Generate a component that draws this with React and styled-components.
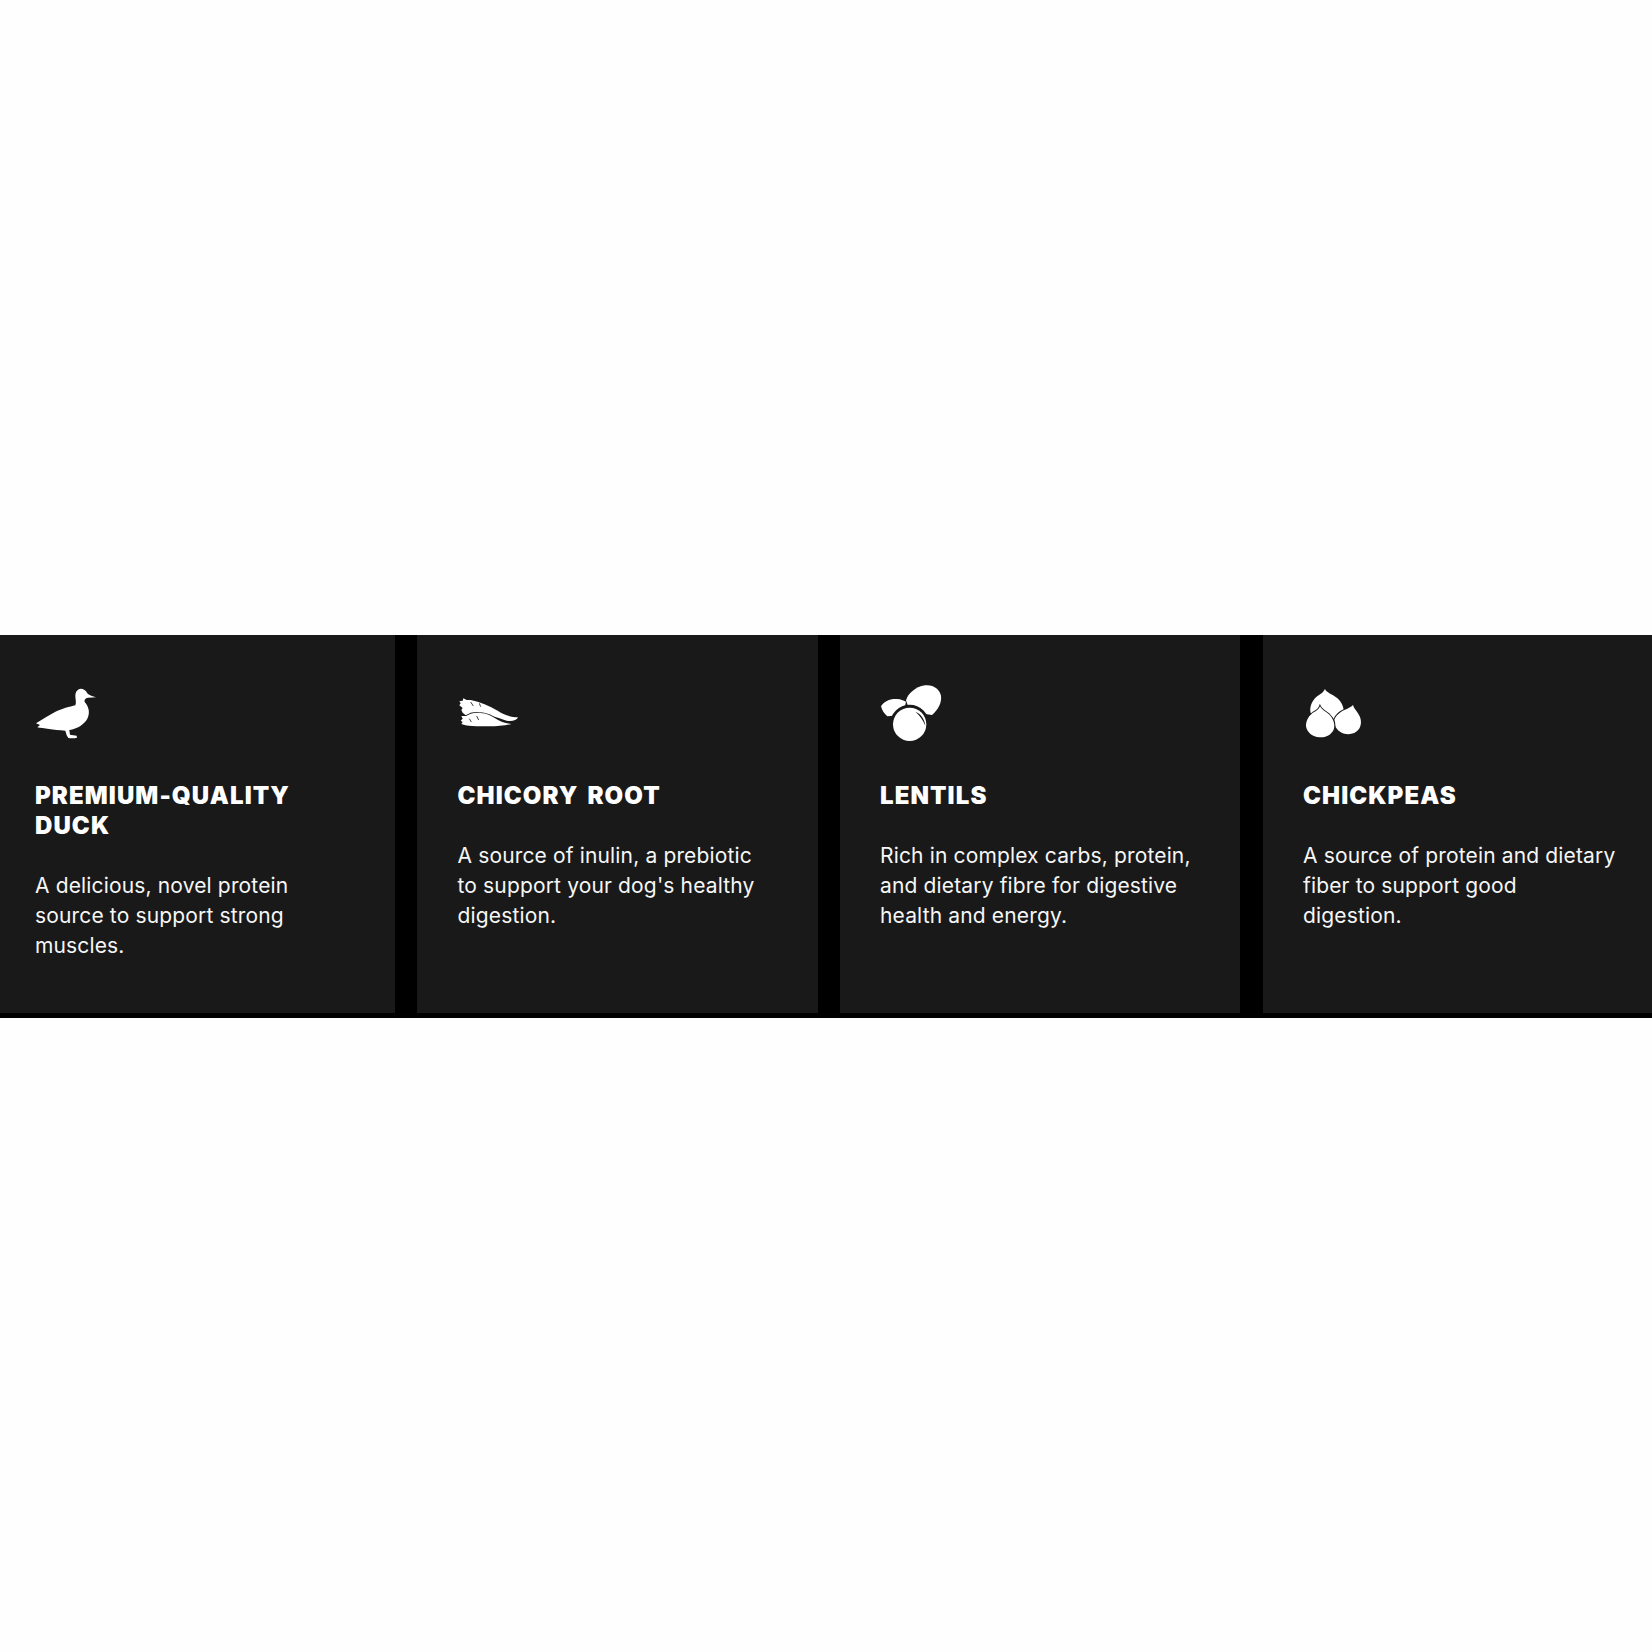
import React from 'react';
import styled, { createGlobalStyle } from 'styled-components';

const Global = createGlobalStyle`
  html, body { margin: 0; padding: 0; background: #fefefe; }
  body { height: 1652px; }
`;

const Page = styled.main`
  padding-top: 635px;
`;

const Band = styled.section`
  display: grid;
  grid-template-columns: 394.5px 400.5px 400px 1fr;
  column-gap: 22.5px;
  background: #000;
  padding-bottom: 5px;
`;

const Card = styled.article`
  background: #191919;
  height: 378px;
  box-sizing: border-box;
  padding: 50px 0 0 ${p => p.$inset}px;
  color: #fff;
`;

const Icon = styled.svg`
  display: block;
  width: 64px;
  height: 56px;
  margin-bottom: 40px;
  fill: #fff;
  overflow: visible;
`;

const Title = styled.h3`
  margin: 0 0 30px;
  font: 900 24px/30px "Inter", "Liberation Sans", sans-serif;
  letter-spacing: 1.1px;
  word-spacing: 3px;
  text-transform: uppercase;
  color: #fff;
`;

const Body = styled.p`
  margin: 0;
  font: 400 21px/30px "Inter", "Liberation Sans", sans-serif;
  letter-spacing: 0.15px;
  color: #f6f6f6;
`;

const Duck = () => (
  <Icon viewBox="45 45 192 168">
    <path d="M228 82C218 78 208 76 203 71C198 60 190 56 182 56C172 57 166 66 166 78C166 88 170 96 166 106C150 110 125 116 105 126C88 135 68 148 48 160L60 165L52 172C70 175 100 180 136 182L140 196L145 204C153 205 163 205 171 203L170 197L150 194L148 180C172 176 192 164 202 146C210 130 208 112 194 96C192 90 196 84 204 83Z" />
  </Icon>
);

const Carrots = () => (
  <Icon viewBox="36 15 192 168">
    <path d="M40 76L44 70L40 64L50 62L52 55L62 60L74 60C102 66 130 78 155 92C172 104 195 112 216 112C212 122 196 125 182 122C168 118 150 110 130 108L62 108L50 98L46 90L50 84Z" />
    <path d="M44 122L50 116L46 108L60 108L74 101C100 94 130 102 146 114C160 124 176 130 196 132C176 138 152 139 130 139C105 139 78 140 58 136L46 132L50 126Z" stroke="#191919" strokeWidth="5" paintOrder="stroke" />
    <path d="M74 66L82 78M100 70L104 80M70 116L76 126M92 108L98 120" stroke="#191919" strokeWidth="2.5" fill="none" />
  </Icon>
);

const Lentils = () => (
  <Icon viewBox="30 30 192 168">
    <path d="M108 76C114 56 135 36 165 31C190 28 208 42 213 62C216 82 204 104 186 120L120 110Z" />
    <path d="M33 94C42 78 62 70 82 72C92 73 100 76 108 80L100 120L52 124C42 116 36 106 33 94Z" />
    <circle cx="119" cy="148" r="50" stroke="#191919" strokeWidth="17" paintOrder="stroke" />
    <path d="M136 110C152 116 164 132 166 152C158 134 150 122 136 110Z" fill="#191919" />
  </Icon>
);

const Chickpeas = () => (
  <Icon viewBox="24 30 192 168">
    <path d="M90 42C94 52 108 56 122 66C134 74 144 88 146 104L110 140L60 130L47 114C42 94 54 70 72 60C80 56 86 50 90 42Z" />
    <path d="M174 90C176 100 186 108 192 120C200 134 200 150 192 162C182 176 164 180 148 176C130 170 116 156 118 134C122 122 136 110 150 104C160 100 168 96 174 90Z" stroke="#191919" strokeWidth="6" paintOrder="stroke" />
    <path d="M75 94C80 104 92 110 102 118C114 130 122 148 116 164C108 180 92 188 74 187C52 186 36 172 33 154C33 134 44 120 56 112C64 108 72 102 75 94Z" stroke="#191919" strokeWidth="6" paintOrder="stroke" />
  </Icon>
);

const items = [
  { inset: 35, art: <Duck />, title: <>Premium-quality<br />duck</>, body: <>A delicious, novel protein<br />source to support strong<br />muscles.</> },
  { inset: 40.5, art: <Carrots />, title: 'Chicory root', body: <>A source of inulin, a prebiotic<br />to support your dog's healthy<br />digestion.</> },
  { inset: 40, art: <Lentils />, title: 'Lentils', body: <>Rich in complex carbs, protein,<br />and dietary fibre for digestive<br />health and energy.</> },
  { inset: 40.5, art: <Chickpeas />, title: 'Chickpeas', body: <>A source of protein and dietary<br />fiber to support good<br />digestion.</> },
];

export default function App() {
  return (
    <Page>
      <Global />
      <Band>
        {items.map((it, i) => (
          <Card key={i} $inset={it.inset}>
            {it.art}
            <Title>{it.title}</Title>
            <Body>{it.body}</Body>
          </Card>
        ))}
      </Band>
    </Page>
  );
}
